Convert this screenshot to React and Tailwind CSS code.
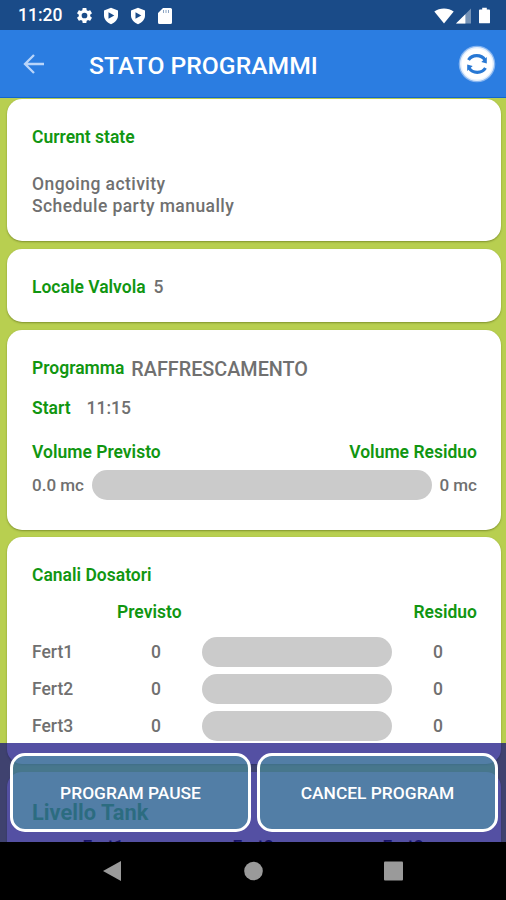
import { memo } from "react";

const ferts = [
  { name: "Fert1", previsto: 0, residuo: 0 },
  { name: "Fert2", previsto: 0, residuo: 0 },
  { name: "Fert3", previsto: 0, residuo: 0 },
];

const Shield = () => (
  <svg viewBox="0 0 16 18" className="w-4 h-[18px]">
    <path
      d="M8 .8 15 3.4v5.2c0 4-3 7-7 8.6-4-1.600-7-4.600-7-8.600V3.400Z"
      fill="#fff"
    />
    <path d="M5.500 5.200v6.600l5.800-3.300Z" fill="#1a4b88" />
  </svg>
);

const StatusBar = () => (
  <div className="h-[30px] shrink-0 bg-[#1a4b88] flex items-center text-white pl-[18px] pr-[16px] pt-[1px]">
    <span className="w-[57px] pt-[1px] text-[17.500px] leading-none font-medium">
      11:20
    </span>
    <svg viewBox="0 0 24 24" className="w-[19px] h-[19px]" fill="#fff">
      <path d="M19.140 12.940c.04-.3.060-.61.060-.94 0-.32-.02-.64-.07-.94l2.030-1.580c.18-.14.230-.41.120-.61l-1.920-3.320c-.12-.22-.37-.29-.59-.22l-2.390.96c-.5-.38-1.030-.7-1.620-.94l-.36-2.540c-.04-.24-.24-.41-.48-.41h-3.840c-.24 0-.43.170-.47.410l-.36 2.540c-.59.240-1.130.570-1.620.940l-2.390-.96c-.22-.08-.47 0-.59.220L2.740 8.870c-.12.210-.08.470.12.610l2.030 1.580c-.05.3-.09.630-.09.940s.02.640.070.940l-2.030 1.580c-.18.140-.23.410-.12.610l1.920 3.320c.12.220.370.290.590.220l2.390-.96c.5.380 1.030.7 1.620.940l.36 2.540c.05.240.240.410.480.410h3.840c.24 0 .44-.17.470-.41l.36-2.540c.59-.24 1.130-.56 1.620-.94l2.390.96c.22.080.470 0 .59-.22l1.920-3.320c.12-.22.070-.47-.12-.61l-2.010-1.580ZM12 15.600a3.600 3.600 0 1 1 0-7.200 3.600 3.600 0 0 1 0 7.200Z" />
    </svg>
    <div className="flex gap-[11px] ml-[9px]">
      <Shield />
      <Shield />
      <svg viewBox="0 0 14 18" className="w-[14px] h-[18px] ml-[1px]">
        <path
          d="M5 1h7.500A1.500 1.500 0 0 1 14 2.500v13a1.500 1.500 0 0 1-1.500 1.500h-11A1.500 1.500 0 0 1 0 15.500V6Z"
          fill="#fff"
        />
        <path
          d="M5.500 3v3M8 3v3M10.500 3v3"
          stroke="#1a4b88"
          strokeOpacity=".5"
          strokeWidth="1"
        />
      </svg>
    </div>
    <div className="flex items-center ml-auto">
      <svg viewBox="0 0 20 16" className="w-5 h-4" fill="#fff">
        <path d="M10 15.500.3 3.500C5.600-.4 14.400-.4 19.700 3.500Z" />
      </svg>
      <svg viewBox="0 0 16 16" className="w-[15px] h-4 ml-[2px]">
        <path d="M0 16 16 0v16Z" fill="#fff" fillOpacity=".4" />
        <path d="M0 16 10 6v10Z" fill="#fff" />
      </svg>
      <svg viewBox="0 0 12 18" className="w-[11px] h-[17px] ml-2" fill="#fff">
        <path d="M3.500.5h5v2H11a1 1 0 0 1 1 1v13a1 1 0 0 1-1 1H1a1 1 0 0 1-1-1v-13a1 1 0 0 1 1-1h2.500Z" />
      </svg>
    </div>
  </div>
);

const AppBar = () => (
  <div className="h-[68px] shrink-0 bg-[#2b7de1] border-b border-[#1265d0] flex items-center pl-[23px] pr-[10px]">
    <svg
      viewBox="0 0 22 20"
      className="w-[22px] h-5"
      fill="none"
      stroke="#b9d5fa"
      strokeWidth="2.300"
    >
      <path d="M21 10H2.500M11 1 2 10l9 9" />
    </svg>
    <h1 className="ml-[44px] pt-[5px] text-[24.700px] leading-none font-medium text-white">
      STATO PROGRAMMI
    </h1>
    <svg viewBox="0 0 38 38" className="w-[38px] h-[38px] ml-auto mt-[1px]">
      <circle cx="19" cy="19" r="18.300" fill="#86b5f0" />
      <circle cx="19" cy="19" r="17" fill="#e4effc" />
      <circle cx="19" cy="19" r="15.500" fill="#fff" />
      <g fill="none" stroke="#2878d4" strokeWidth="3.200">
        <path d="M10.500 15a9.500 8.500 0 0 1 16.500 0" />
        <path d="M27.500 23a9.500 8.500 0 0 1-16.500 0" />
      </g>
      <path
        d="M28.800 12v6.500l-5.500-1.500ZM9.200 26v-6.500l5.500 1.500Z"
        fill="#2878d4"
      />
    </svg>
  </div>
);

const Card = ({ className, children }) => (
  <div
    className={`shrink-0 bg-white rounded-[15px] pl-[25px] pr-6 shadow-[0_1px_2px_rgba(60,70,0,0.45)] ${className}`}
  >
    {children}
  </div>
);

const Label = ({ children }) => (
  <span className="text-[#119611] font-semibold whitespace-nowrap">
    {children}
  </span>
);

const ActionButton = ({ children }) => (
  <button
    type="button"
    className="h-[79px] flex-1 rounded-[15px] border-[3px] border-white bg-[#50aca9]/50 text-white text-[17.400px] font-medium"
  >
    {children}
  </button>
);

const App = () => {
  return (
    <div className="w-[506px] h-[900px] overflow-hidden flex flex-col bg-black font-['Roboto',sans-serif]">
      <StatusBar />
      <AppBar />
      <div className="relative h-[744px] shrink-0 overflow-hidden bg-[#b8cf50] text-[17.500px] leading-[22px] font-medium text-[#707070]">
        <div className="flex flex-col gap-2 pt-[1px] pl-[7px] pr-[5px]">
          <Card className="h-[142px] pt-[27px]">
            <Label>Current state</Label>
            <p className="mt-[25px] tracking-[0.43px]">Ongoing activity</p>
            <p className="tracking-[0.43px]">Schedule party manually</p>
          </Card>
          <Card className="h-[73px] flex items-center gap-2 pt-[3px]">
            <Label>Locale Valvola</Label>
            <span>5</span>
          </Card>
          <Card className="h-[200px] pt-[27px]">
            <div className="flex gap-[7px]">
              <Label>Programma</Label>
              <span className="text-[19.800px] pt-[2px]">RAFFRESCAMENTO</span>
            </div>
            <div className="flex gap-4 mt-[16px]">
              <Label>Start</Label>
              <span>11:15</span>
            </div>
            <div className="flex justify-between mt-[22px]">
              <Label>Volume Previsto</Label>
              <Label>Volume Residuo</Label>
            </div>
            <div className="flex items-center mt-[7px] text-[17px]">
              <span className="w-[60px]">0.0 mc</span>
              <div className="h-[30px] w-[340px] rounded-full bg-[#cbcbcb]"></div>
              <span className="ml-auto">0 mc</span>
            </div>
          </Card>
          <Card className="h-[227px] pt-[27px] -mt-[1px]">
            <Label>Canali Dosatori</Label>
            <div className="flex justify-between mt-[15px] pl-[85px]">
              <Label>Previsto</Label>
              <Label>Residuo</Label>
            </div>
            <div className="flex flex-col gap-[7px] mt-[14px]">
              {ferts.map((item) => (
                <div key={item.name} className="flex items-center h-[30px]">
                  <span className="w-[78px] shrink-0">{item.name}</span>
                  <span className="w-[92px] shrink-0 text-center">
                    {item.previsto}
                  </span>
                  <div className="h-[30px] w-[190px] shrink-0 rounded-full bg-[#cbcbcb]"></div>
                  <span className="w-[92px] shrink-0 text-center">
                    {item.residuo}
                  </span>
                </div>
              ))}
            </div>
          </Card>
          <Card className="h-[200px] pt-[30px]">
            <p className="text-[21.800px] font-bold text-[#008a00]">
              Livello Tank
            </p>
            <div className="flex -ml-[4px] mt-[12px] text-[#333]">
              <span className="w-[150px] shrink-0 text-center">Fert1</span>
              <span className="w-[150px] shrink-0 text-center">Fert2</span>
              <span className="w-[150px] shrink-0 text-center">Fert3</span>
            </div>
          </Card>
        </div>
        <div className="absolute inset-x-0 bottom-0 h-[99px] bg-[#0b057c]/70 flex gap-[6px] pt-[10px] pl-[10px] pr-[8px]">
          <ActionButton>PROGRAM PAUSE</ActionButton>
          <ActionButton>CANCEL PROGRAM</ActionButton>
        </div>
      </div>
      <div className="flex-1 bg-black flex items-center">
        <svg viewBox="0 0 506 58" className="w-full h-[58px]" fill="#9a9a9a">
          <path d="M103 29 121 19v20Z" />
          <circle cx="253.500" cy="29" r="9.300" />
          <rect x="384" y="19.500" width="19" height="19" rx="1" />
        </svg>
      </div>
    </div>
  );
};
export default memo(App);
